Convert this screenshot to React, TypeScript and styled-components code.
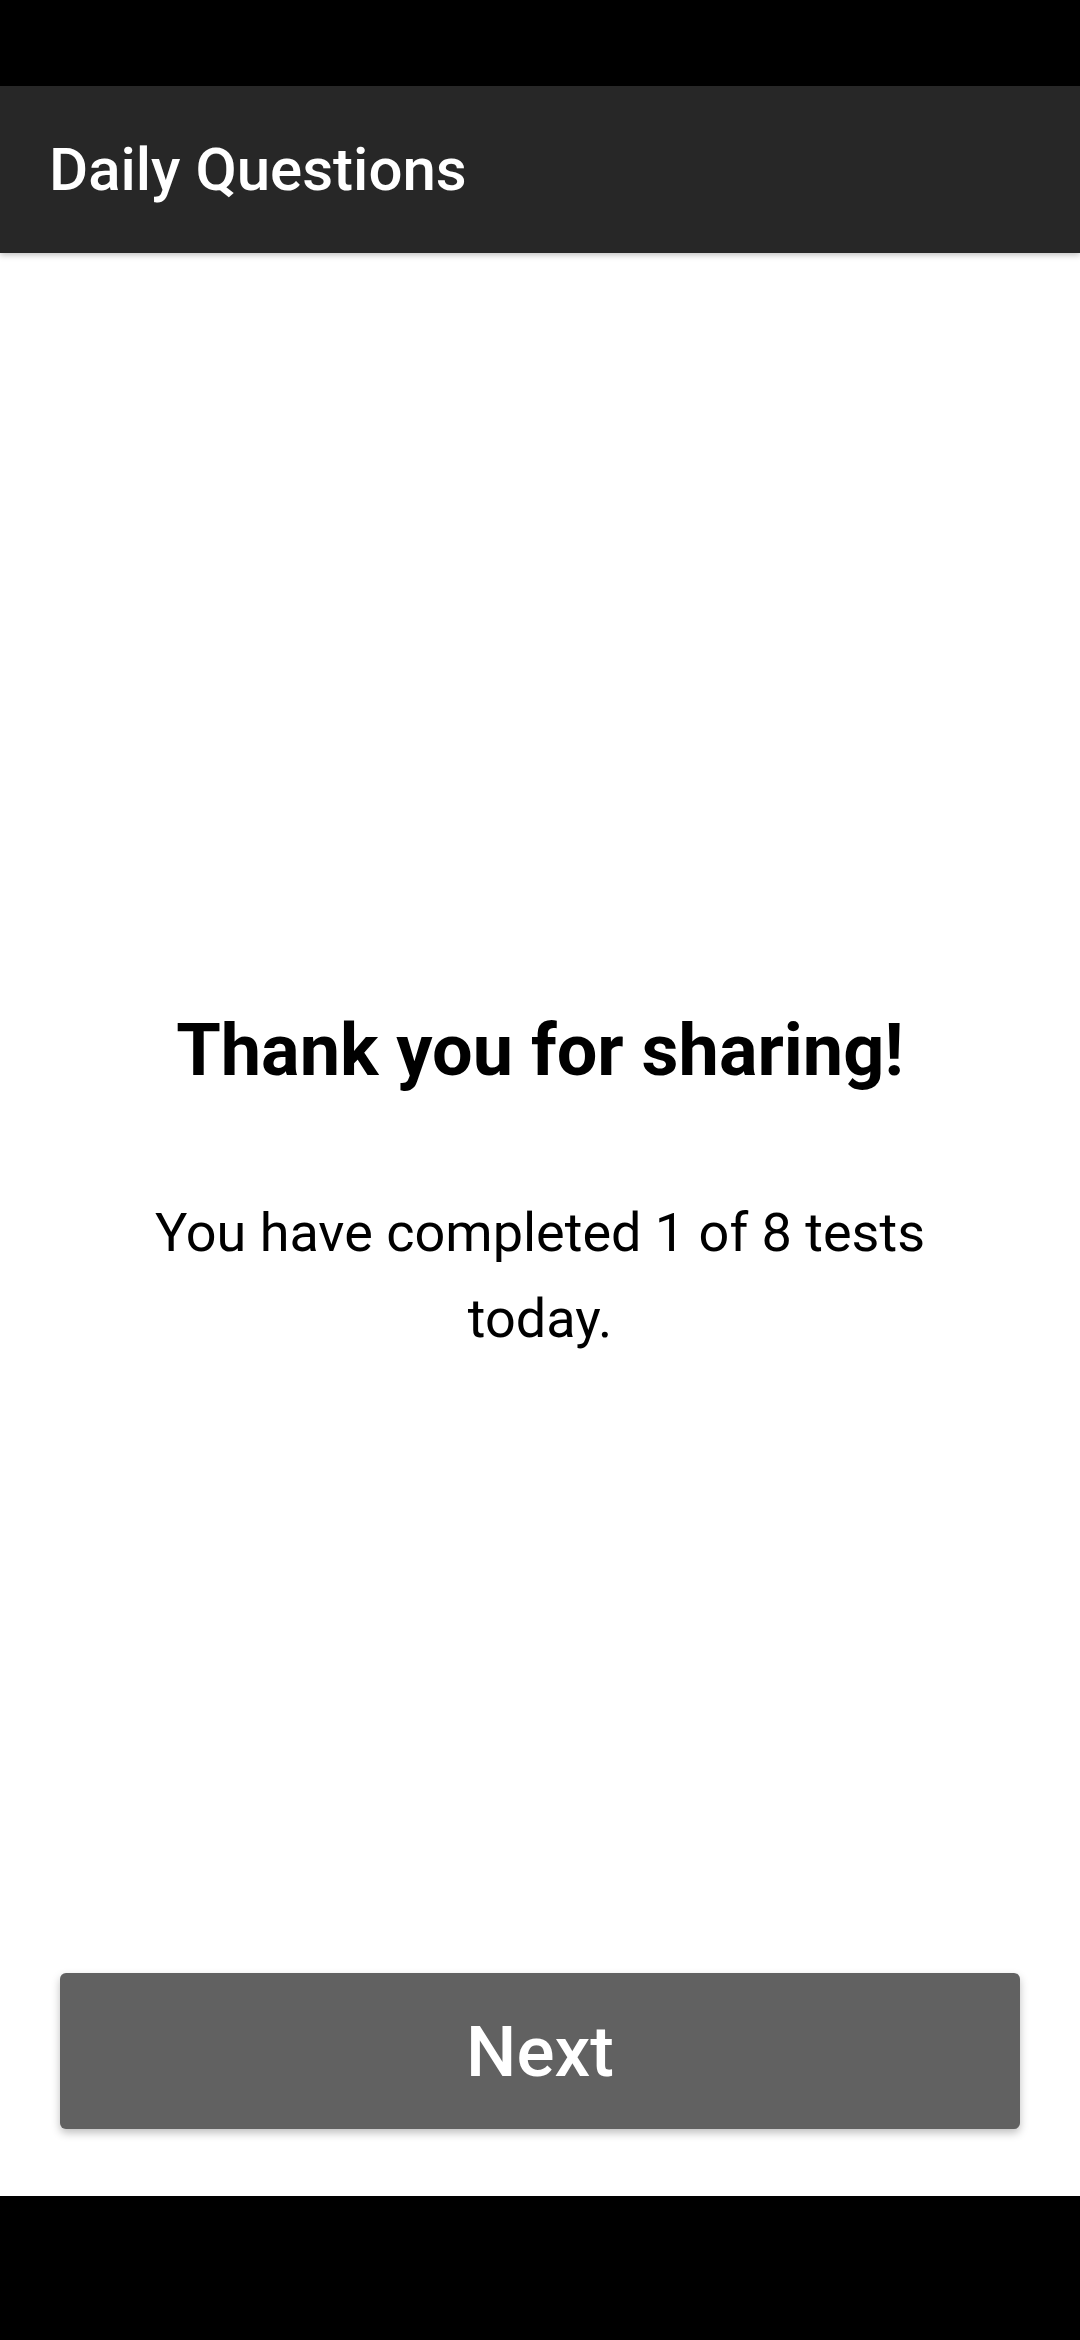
import React from 'react'
import styled, { createGlobalStyle } from 'styled-components'

const GlobalStyle = createGlobalStyle`
  html, body {
    margin: 0;
    padding: 0;
    height: 100%;
    background: #ffffff;
  }
  #root {
    height: 100%;
  }
  * {
    box-sizing: border-box;
  }
`

const Screen = styled.div`
  display: flex;
  flex-direction: column;
  width: 1080px;
  height: 2340px;
  font-family: Roboto, 'Liberation Sans', sans-serif;
  background: #ffffff;
`

const StatusBar = styled.div`
  height: 86px;
  background: #000000;
  flex-shrink: 0;
`

const AppBar = styled.header`
  height: 167px;
  flex-shrink: 0;
  display: flex;
  align-items: center;
  padding-left: 49px;
  background: #272727;
  box-shadow: 0 2px 6px rgba(0, 0, 0, 0.25);
  position: relative;
  z-index: 1;
`

const Title = styled.h1`
  margin: 0;
  color: #ffffff;
  font-size: 60px;
  font-weight: 500;
  line-height: 1;
`

const Content = styled.main`
  flex: 1;
  display: flex;
  flex-direction: column;
`

const Message = styled.section`
  flex: 1;
  display: flex;
  flex-direction: column;
  align-items: center;
  justify-content: center;
  padding: 144px 150px 0;
  text-align: center;
`

const Heading = styled.h2`
  margin: 0 0 96px;
  color: #000000;
  font-size: 72px;
  font-weight: 700;
  line-height: 1.2;
`

const Body = styled.p`
  margin: 0;
  color: #000000;
  font-size: 54px;
  font-weight: 400;
  line-height: 86px;
`

const Footer = styled.div`
  padding: 0 60px 67px;
`

const NextButton = styled.button`
  width: 100%;
  height: 156px;
  border: none;
  border-radius: 6px;
  background: #616161;
  color: #ffffff;
  font-family: Roboto, 'Liberation Sans', sans-serif;
  font-size: 71px;
  font-weight: 500;
  box-shadow: 0 4px 8px rgba(0, 0, 0, 0.25);
`

const NavBar = styled.div`
  height: 144px;
  background: #000000;
  flex-shrink: 0;
`

const App = () => (
  <>
    <GlobalStyle />
    <Screen>
      <StatusBar />
      <AppBar>
        <Title>Daily Questions</Title>
      </AppBar>
      <Content>
        <Message>
          <Heading>Thank you for sharing!</Heading>
          <Body>You have completed 1 of 8 tests today.</Body>
        </Message>
        <Footer>
          <NextButton>Next</NextButton>
        </Footer>
      </Content>
      <NavBar />
    </Screen>
  </>
)

export default App
